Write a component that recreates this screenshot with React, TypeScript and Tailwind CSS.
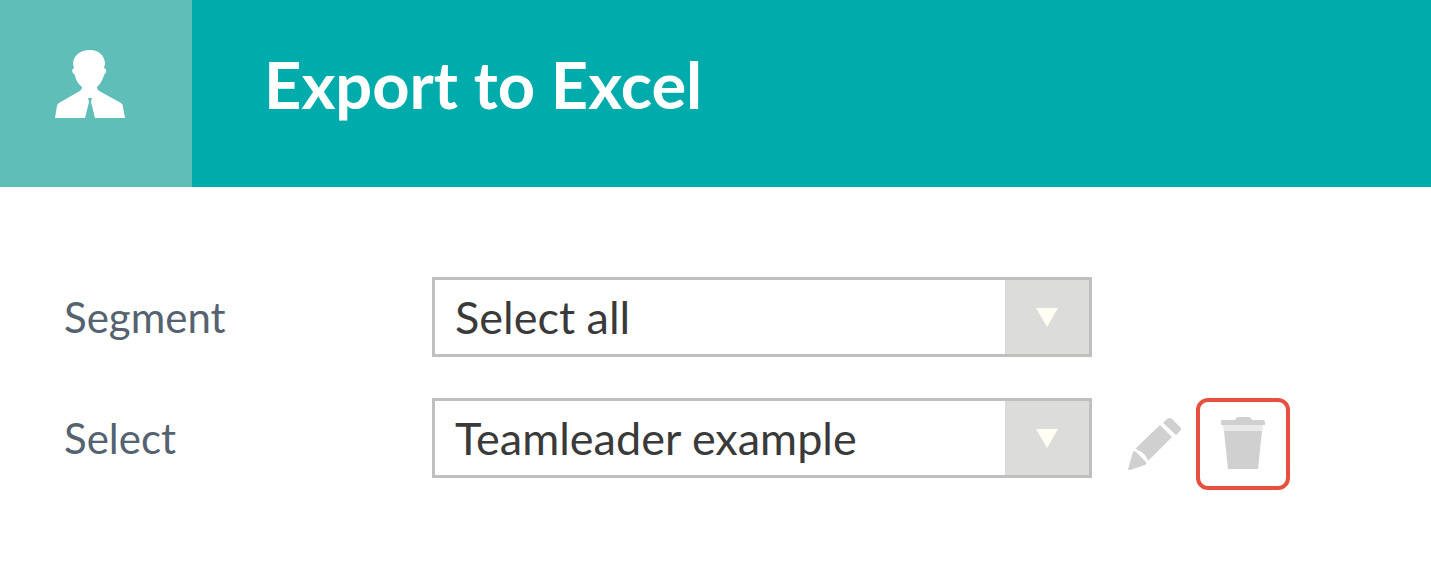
import { useState } from 'react';

interface SelectFieldProps {
  id: string;
  value: string;
  options: string[];
  onChange: (value: string) => void;
}

function SelectField({ id, value, options, onChange }: SelectFieldProps) {
  return (
    <div className="relative min-w-0 w-[660px]">
      <select
        id={id}
        value={value}
        onChange={(e) => onChange(e.target.value)}
        className="block h-20 w-full appearance-none border-3 border-[#bfbfbe] bg-white pl-5 pr-24 text-[45px] leading-[56px] text-[#3a3a3a] focus:outline-none"
      >
        {options.map((option) => (
          <option key={option} value={option}>
            {option}
          </option>
        ))}
      </select>
      {/* Arrow panel on top of the native control */}
      <span
        aria-hidden="true"
        className="pointer-events-none absolute inset-y-[3px] right-[3px] flex w-[84px] items-center justify-center bg-[#dcdcda]"
      >
        <svg width="22" height="20" viewBox="0 0 22 20" fill="#fffff4">
          <path d="M0 1h22L11 20z" />
        </svg>
      </span>
    </div>
  );
}

function PersonIcon() {
  return (
    <svg width="70" height="70" viewBox="0 0 70 70" fill="#ffffff" aria-hidden="true">
      <path d="M35 1C44 1 50 7 50 15L49 19Q52 20 51 23Q50 25 49 26C47 33 44 36 42 38Q42 41 46 43L66 54Q68 55 68 58L70 69H40L36 53L37 49H33L34 53L30 69H0L2 57Q2 55 4 54L23 43Q27 41 27 38C25 36 21 33 20 26Q17 24 17 21L19 19L18 15C18 7 25 1 35 1Z" />
    </svg>
  );
}

function PencilIcon() {
  return (
    <svg width="54" height="54" viewBox="0 0 54 54" fill="#d0d0d0" aria-hidden="true">
      <path d="M0 52L5 35Q7 33 9 36L17 44Q20 46 17 48L2 53Q0 53 0 52Z" />
      <path d="M8 31L32 8L44 20L20 44Q19 40 16 37Q13 34 9 33Q8 32 8 31Z" />
      <path d="M35 6L39 2Q41 0 44 2L52 10Q54 12 52 14L48 18Z" />
    </svg>
  );
}

function TrashIcon() {
  return (
    <svg width="44" height="54" viewBox="0 0 44 54" fill="#d0d0d0" aria-hidden="true">
      <path d="M2 8H42L41 15H3Z" fill="#e9e9e9" />
      <path d="M0 4Q0 3 2 3H14Q15 0 18 0H27Q30 0 31 3H42Q44 3 44 5V8H0Z" />
      <path d="M3 14H41L37 52H7Z" />
    </svg>
  );
}

export default function App() {
  const [segment, setSegment] = useState('Select all');
  const [template, setTemplate] = useState('Teamleader example');

  return (
    <div className="bg-white font-['Lato','Liberation_Sans',sans-serif]">
      <header className="flex h-[187px] bg-[#00acab]">
        <div className="flex w-48 shrink-0 justify-center bg-[#60beb9] pt-[49px] pr-3">
          <PersonIcon />
        </div>
        <h1 className="pt-12 pl-[72px] text-[65px] leading-[72px] font-bold text-white">
          Export to Excel
        </h1>
      </header>

      <form className="flex flex-col gap-[41px] px-16 pt-[90px]">
        <div className="flex items-start">
          <label
            htmlFor="segment"
            className="w-[368px] shrink-0 text-[42px] leading-[80px] text-[#556270]"
          >
            Segment
          </label>
          <SelectField
            id="segment"
            value={segment}
            options={['Select all']}
            onChange={setSegment}
          />
        </div>

        <div className="flex items-start">
          <label
            htmlFor="template"
            className="w-[368px] shrink-0 text-[42px] leading-[80px] text-[#556270]"
          >
            Select
          </label>
          <SelectField
            id="template"
            value={template}
            options={['Teamleader example']}
            onChange={setTemplate}
          />
          <div className="ml-9 flex shrink-0 items-center gap-[14px]">
            <button type="button" aria-label="Edit">
              <PencilIcon />
            </button>
            <button
              type="button"
              aria-label="Delete"
              className="flex h-[92px] w-[94px] items-center justify-center rounded-xl border-4 border-[#e5503f]"
            >
              <TrashIcon />
            </button>
          </div>
        </div>
      </form>
    </div>
  );
}
